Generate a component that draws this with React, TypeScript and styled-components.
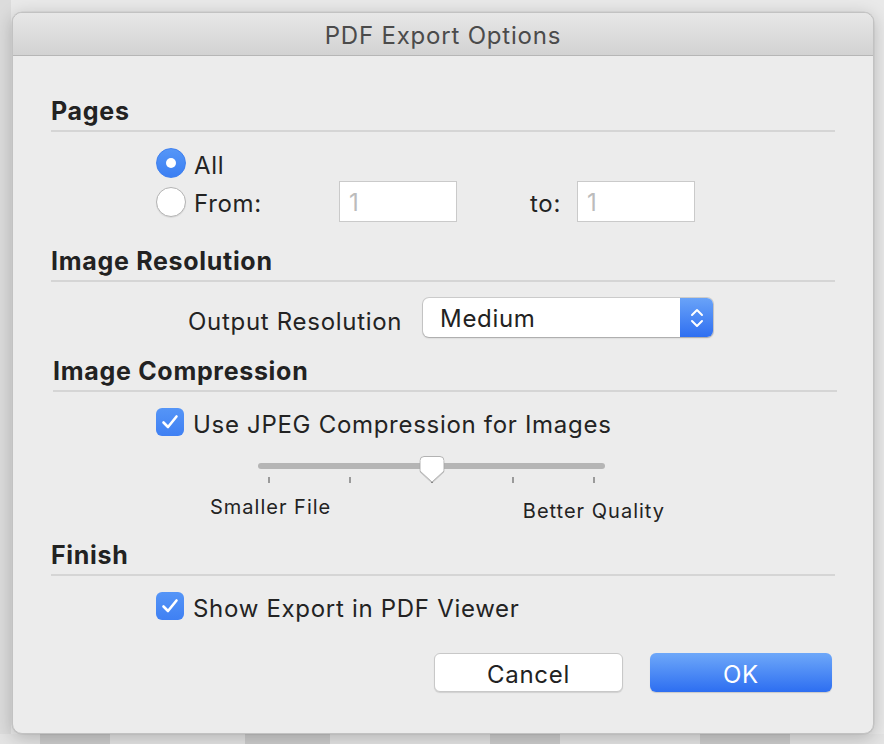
import React from "react";
import styled, { createGlobalStyle } from "styled-components";

const GlobalStyle = createGlobalStyle`
  html, body {
    margin: 0;
    padding: 0;
  }
  body {
    background: #e7e7e7;
    font-family: Inter, "Noto Sans", "Liberation Sans", sans-serif;
    -webkit-font-smoothing: antialiased;
  }
`;

const Desktop = styled.div`
  width: 884px;
  height: 744px;
  overflow: hidden;
  box-sizing: border-box;
  padding: 12px 0 0 12px;
  display: flex;
  flex-direction: column;
  background: linear-gradient(90deg, #dcdcdc 0, #dcdcdc 11px, #e9e9e9 11px);
`;

const Dialog = styled.div`
  width: 862px;
  height: 722px;
  flex-shrink: 0;
  box-sizing: border-box;
  display: flex;
  flex-direction: column;
  background: #ececec;
  border: 1px solid #c2c2c2;
  border-radius: 10px;
  overflow: hidden;
  box-shadow: 0 4px 18px rgba(0, 0, 0, 0.22), 0 0 0 0.5px rgba(0, 0, 0, 0.08);
  position: relative;
  z-index: 1;
`;

const TitleBar = styled.div`
  height: 42px;
  flex-shrink: 0;
  border-bottom: 1px solid #b6b6b6;
  background: linear-gradient(#e7e7e7, #d2d2d2);
  text-align: center;
  line-height: 45px;
  font-size: 24px;
  letter-spacing: 0.8px;
  color: #4b4b4b;
`;

const Body = styled.div`
  display: flex;
  flex-direction: column;
  padding: 40px 38px 0 38px;
`;

const SectionHead = styled.div<{ $top: number; $shift?: number }>`
  margin-top: ${(p) => p.$top}px;
  margin-left: ${(p) => p.$shift ?? 0}px;
  margin-right: ${(p) => -(p.$shift ?? 0)}px;
  display: flex;
  flex-direction: column;
`;

const Heading = styled.h2`
  margin: 0;
  font-size: 25px;
  letter-spacing: 0.7px;
  line-height: 30px;
  font-weight: 700;
  color: #222;
`;

const Divider = styled.div`
  height: 2px;
  margin-top: 4px;
  background: #d5d5d5;
`;

const Row = styled.div<{ $top: number; $indent: number; $height: number }>`
  display: flex;
  align-items: center;
  margin-top: ${(p) => p.$top}px;
  margin-left: ${(p) => p.$indent}px;
  height: ${(p) => p.$height}px;
`;

const Label = styled.span<{ $width?: number; $gap?: number; $drop?: number }>`
  font-size: 24px;
  letter-spacing: 0.7px;
  color: #232323;
  white-space: nowrap;
  padding-top: ${(p) => p.$drop ?? 4}px;
  margin-left: ${(p) => p.$gap ?? 0}px;
  ${(p) => (p.$width ? `width: ${p.$width}px; flex-shrink: 0;` : "")}
`;

const RadioCircle = styled.span<{ $on?: boolean }>`
  width: 30px;
  height: 30px;
  border-radius: 50%;
  box-sizing: border-box;
  flex-shrink: 0;
  display: flex;
  align-items: center;
  justify-content: center;
  background: ${(p) => (p.$on ? "linear-gradient(#5596f7, #3b7ff3)" : "#fff")};
  border: 1px solid ${(p) => (p.$on ? "#3f80ef" : "#b3b3b3")};
  box-shadow: ${(p) => (p.$on ? "none" : "0 1px 1px rgba(0,0,0,0.08)")};

  &::after {
    content: "";
    display: ${(p) => (p.$on ? "block" : "none")};
    width: 10px;
    height: 10px;
    border-radius: 50%;
    background: #fff;
  }
`;

const Field = styled.div`
  width: 118px;
  height: 41px;
  box-sizing: border-box;
  flex-shrink: 0;
  background: #fff;
  border: 1px solid #cacaca;
  padding: 2px 0 0 9px;
  font-size: 24px;
  line-height: 37px;
  color: #bcbcbc;
`;

const Popup = styled.div`
  width: 290px;
  height: 39px;
  box-sizing: border-box;
  display: flex;
  background: #fff;
  border-radius: 6px;
  box-shadow: 0 0 0 1px rgba(0, 0, 0, 0.13), 0 1px 2px rgba(0, 0, 0, 0.2);
  overflow: hidden;
`;

const PopupText = styled.span`
  flex: 1;
  padding: 2px 0 0 17px;
  font-size: 24px;
  letter-spacing: 0.7px;
  line-height: 37px;
  color: #222;
`;

const Stepper = styled.span`
  width: 33px;
  display: flex;
  align-items: center;
  justify-content: center;
  background: linear-gradient(#69a3f8, #2f6ff1);
`;

const CheckBox = styled.span`
  width: 28px;
  height: 28px;
  flex-shrink: 0;
  border-radius: 6px;
  background: linear-gradient(#5595f7, #3f80f3);
  display: flex;
  align-items: center;
  justify-content: center;
`;

const SliderWrap = styled.div`
  position: relative;
  width: 347px;
  margin-top: 19px;
  margin-left: 207px;
  height: 28px;
  display: flex;
  flex-direction: column;
`;

const Track = styled.div`
  height: 6px;
  margin-top: 8px;
  border-radius: 3px;
  background: #b5b5b5;
`;

const Ticks = styled.div`
  display: flex;
  justify-content: space-between;
  padding: 0 10px;
  margin-top: 8px;
`;

const Tick = styled.span`
  width: 2px;
  height: 6px;
  background: #9a9a9a;
`;

const Thumb = styled.svg`
  position: absolute;
  left: 50%;
  top: 1px;
  transform: translateX(-50%);
  filter: drop-shadow(0 1px 0.5px rgba(0, 0, 0, 0.15));
`;

const SliderLabels = styled.div`
  display: flex;
  justify-content: space-between;
  align-items: flex-start;
  width: 455px;
  margin-left: 159px;
  margin-top: 13px;
`;

const SmallLabel = styled.span<{ $drop?: number }>`
  font-size: 20px;
  letter-spacing: 1px;
  line-height: 22px;
  color: #232323;
  white-space: nowrap;
  margin-top: ${(p) => p.$drop ?? 0}px;
`;

const Footer = styled.div`
  display: flex;
  justify-content: flex-end;
  gap: 27px;
  margin-top: 33px;
  margin-right: 3px;
`;

const Button = styled.button<{ $primary?: boolean; $width: number }>`
  width: ${(p) => p.$width}px;
  height: 39px;
  border-radius: 6px;
  font-family: inherit;
  font-size: 24px;
  letter-spacing: 0.7px;
  padding: 3px 0 0;
  cursor: pointer;
  color: ${(p) => (p.$primary ? "#fff" : "#222")};
  background: ${(p) =>
    p.$primary ? "linear-gradient(#6ea8f9, #2d6ef1)" : "#fff"};
  border: ${(p) => (p.$primary ? "none" : "1px solid #c8c8c8")};
  box-shadow: ${(p) =>
    p.$primary
      ? "0 1px 1px rgba(0,0,0,0.15)"
      : "0 1px 1px rgba(0,0,0,0.12)"};
`;

const ThumbStrip = styled.div`
  display: flex;
  height: 10px;
  margin-left: -12px;
  flex-shrink: 0;
  background: #e4e4e4;
`;

const StripTile = styled.span<{ $left: number; $width: number }>`
  margin-left: ${(p) => p.$left}px;
  width: ${(p) => p.$width}px;
  background: #cdcdcd;
`;

const Check = () => (
  <svg width="18" height="16" viewBox="0 0 18 16">
    <path
      d="M2.5 8.5 L7 13 L15.5 2.5"
      fill="none"
      stroke="#fff"
      strokeWidth="2.6"
      strokeLinecap="round"
      strokeLinejoin="round"
    />
  </svg>
);

export default function App() {
  return (
    <>
      <GlobalStyle />
      <Desktop>
        <Dialog>
          <TitleBar>PDF Export Options</TitleBar>
          <Body>
            <SectionHead $top={0}>
              <Heading>Pages</Heading>
              <Divider />
            </SectionHead>
            <Row $top={15} $indent={105} $height={32}>
              <RadioCircle $on />
              <Label $gap={8}>All</Label>
            </Row>
            <Row $top={2} $indent={105} $height={41}>
              <RadioCircle />
              <Label $gap={8} $width={145}>
                From:
              </Label>
              <Field>1</Field>
              <Label $gap={73} $width={47}>
                to:
              </Label>
              <Field>1</Field>
            </Row>

            <SectionHead $top={24}>
              <Heading>Image Resolution</Heading>
              <Divider />
            </SectionHead>
            <Row $top={16} $indent={137} $height={39}>
              <Label $width={235} $drop={8}>
                Output Resolution
              </Label>
              <Popup>
                <PopupText>Medium</PopupText>
                <Stepper>
                  <svg width="16" height="24" viewBox="0 0 16 24">
                    <path
                      d="M3 9 L8 4 L13 9 M3 15 L8 20 L13 15"
                      fill="none"
                      stroke="#fff"
                      strokeWidth="2"
                      strokeLinecap="round"
                      strokeLinejoin="round"
                    />
                  </svg>
                </Stepper>
              </Popup>
            </Row>

            <SectionHead $top={19} $shift={2}>
              <Heading>Image Compression</Heading>
              <Divider />
            </SectionHead>
            <Row $top={16} $indent={105} $height={28}>
              <CheckBox>
                <Check />
              </CheckBox>
              <Label $gap={9}>Use JPEG Compression for Images</Label>
            </Row>
            <SliderWrap>
              <Track />
              <Ticks>
                {[0, 1, 2, 3, 4].map((i) => (
                  <Tick key={i} />
                ))}
              </Ticks>
              <Thumb width="25" height="27" viewBox="0 0 25 27">
                <path
                  d="M4.5 0.5 H20.5 Q24.5 0.5 24.5 4.5 V15 L12.5 26 L0.5 15 V4.5 Q0.5 0.5 4.5 0.5 Z"
                  fill="#fff"
                  stroke="#b2b2b2"
                  strokeWidth="1"
                />
              </Thumb>
            </SliderWrap>
            <SliderLabels>
              <SmallLabel>Smaller File</SmallLabel>
              <SmallLabel $drop={4}>Better Quality</SmallLabel>
            </SliderLabels>

            <SectionHead $top={18}>
              <Heading>Finish</Heading>
              <Divider />
            </SectionHead>
            <Row $top={16} $indent={105} $height={28}>
              <CheckBox>
                <Check />
              </CheckBox>
              <Label $gap={9}>Show Export in PDF Viewer</Label>
            </Row>

            <Footer>
              <Button $width={189}>Cancel</Button>
              <Button $primary $width={182}>
                OK
              </Button>
            </Footer>
          </Body>
        </Dialog>
        <ThumbStrip>
          <StripTile $left={40} $width={70} />
          <StripTile $left={135} $width={85} />
          <StripTile $left={160} $width={70} />
          <StripTile $left={140} $width={90} />
        </ThumbStrip>
      </Desktop>
    </>
  );
}
